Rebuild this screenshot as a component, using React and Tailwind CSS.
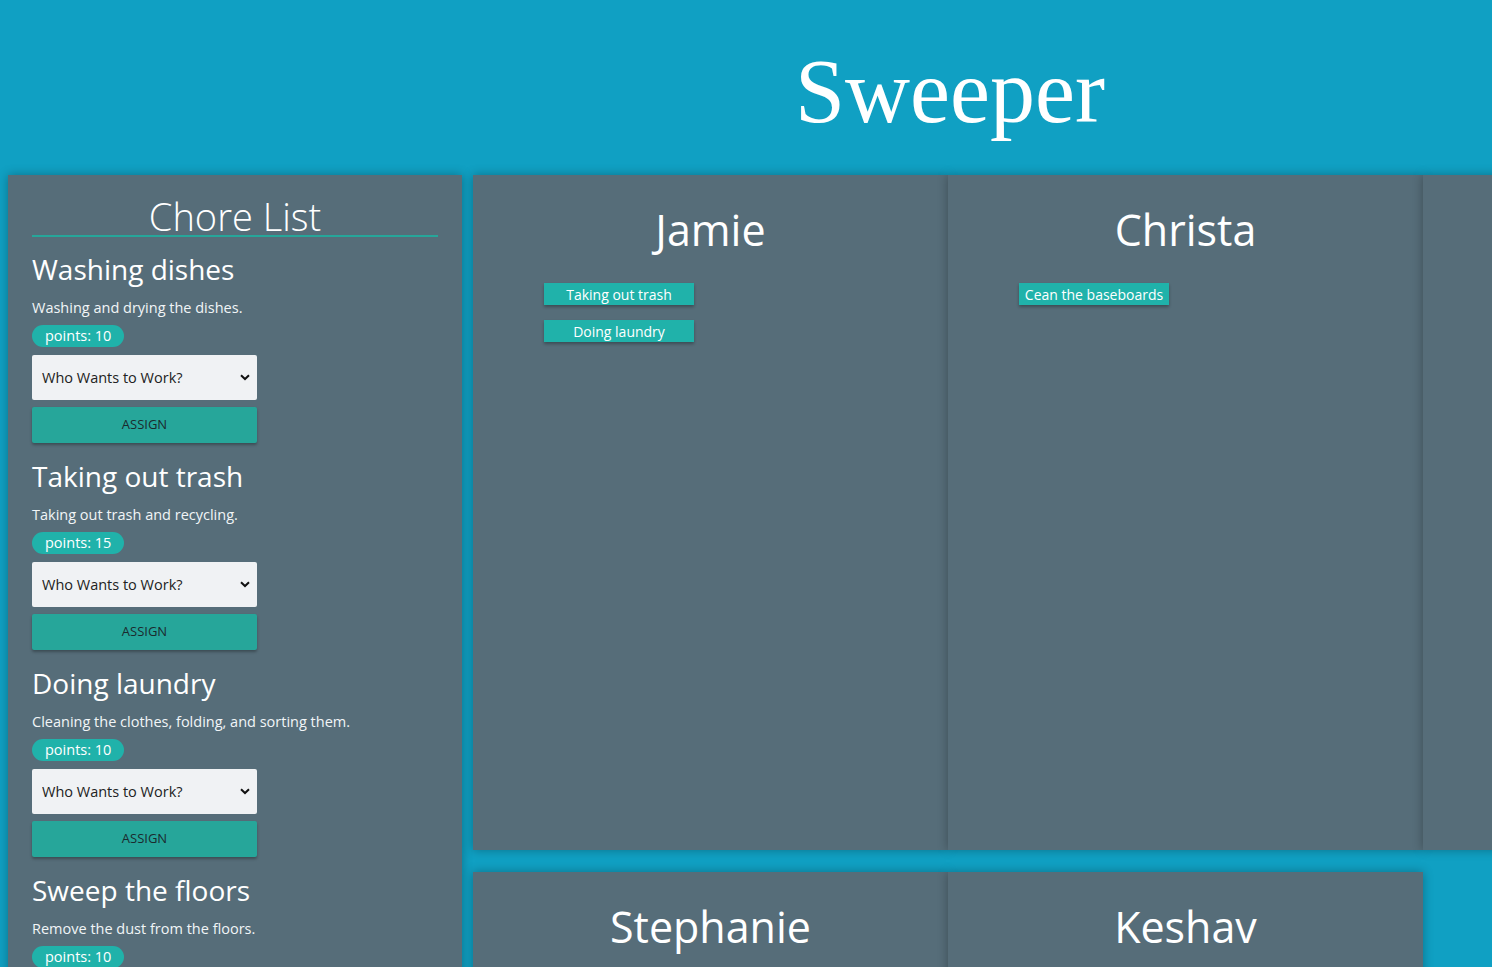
import React from "react";

const chores = [
  { id: 1, title: "Washing dishes", desc: "Washing and drying the dishes.", points: 10 },
  { id: 2, title: "Taking out trash", desc: "Taking out trash and recycling.", points: 15 },
  { id: 3, title: "Doing laundry", desc: "Cleaning the clothes, folding, and sorting them.", points: 10 },
  { id: 4, title: "Sweep the floors", desc: "Remove the dust from the floors.", points: 10 },
  { id: 5, title: "Clean the baseboards", desc: "Wipe down every baseboard in the house.", points: 20 },
];

const people = [
  { name: "Jamie", chores: ["Taking out trash", "Doing laundry"] },
  { name: "Christa", chores: ["Cean the baseboards"] },
  { name: "Marcus", chores: [] },
  { name: "Stephanie", chores: [] },
  { name: "Keshav", chores: [] },
];

const Chevron = () => (
  <svg width="10" height="7" viewBox="0 0 10 7" className="absolute right-[7px] top-[19px]">
    <path d="M1 1.2 L5 5 L9 1.2" fill="none" stroke="#111" strokeWidth="2" />
  </svg>
);

const ChoreItem = ({ chore, first }) => (
  <div className={first ? "mt-[14px]" : "mt-[15px]"}>
    <h3 className="text-[28px] leading-[36px] text-white">{chore.title}</h3>
    <p className="mt-[11px] text-[14.5px] leading-[20px] text-[#f1f5f7]">{chore.desc}</p>
    <div className="mt-[7px] flex h-[22px] w-fit items-center rounded-full bg-[#20b2aa] px-[13px] text-[14.5px] text-white">
      points: {chore.points}
    </div>
    <div className="relative mt-[8px] w-[225px]">
      <select
        defaultValue=""
        className="block h-[45px] w-full appearance-none rounded-[2px] bg-[#f0f2f4] pl-[10px] text-[14.5px] text-[#222] outline-none"
      >
        <option value="">Who Wants to Work?</option>
        {people.map((p) => (
          <option key={p.name}>{p.name}</option>
        ))}
      </select>
      <Chevron />
    </div>
    <button className="mt-[7px] block h-[36px] w-[225px] rounded-[2px] bg-[#26a69a] text-[13px] text-[#1b2a2e] shadow-[0_2px_3px_rgba(0,0,0,0.3)]">
      ASSIGN
    </button>
  </div>
);

const PersonCard = ({ person }) => (
  <div className="h-[675px] bg-[#566d79] pt-[33px] shadow-[0_0_10px_rgba(0,0,0,0.3)]">
    <h2 className="text-center text-[43px] leading-none text-white">{person.name}</h2>
    <div className="mt-[32px] flex flex-col gap-[15px] pl-[71px]">
      {person.chores.map((c) => (
        <div
          key={c}
          className="flex h-[22px] w-[150px] items-center justify-center whitespace-nowrap bg-[#20b2aa] text-[14px] text-white shadow-[0_2px_3px_rgba(0,0,0,0.3)]"
        >
          {c}
        </div>
      ))}
    </div>
  </div>
);

export default function App() {
  return (
    <div className="min-h-screen w-[1900px] bg-[#10a0c3] font-['Open_Sans',sans-serif]">
      <header className="flex h-[175px] justify-center">
        <h1 className="mt-[47px] font-['Liberation_Serif',serif] text-[90px] leading-none text-white">
          Sweeper
        </h1>
      </header>

      <div className="flex items-start">
        {/* Chore list */}
        <aside className="ml-2 w-[454px] bg-[#566d79] px-6 pb-10 pt-[22px] shadow-[0_0_10px_rgba(0,0,0,0.3)]">
          <h2 className="border-b-2 border-[#26a69a] text-center text-[38px] font-light leading-none text-white">
            Chore List
          </h2>
          {chores.map((c, i) => (
            <ChoreItem key={c.id} chore={c} first={i === 0} />
          ))}
        </aside>

        {/* People */}
        <div className="ml-[11px] grid grid-cols-[repeat(3,475px)] gap-y-[22px]">
          {people.map((p) => (
            <PersonCard key={p.name} person={p} />
          ))}
        </div>
      </div>
    </div>
  );
}
